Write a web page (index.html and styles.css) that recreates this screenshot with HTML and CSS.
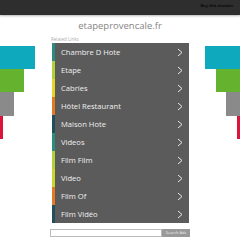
FILE: index.html
```html
<!DOCTYPE html>
<html>
<head>
<meta charset="utf-8">
<link rel="stylesheet" href="styles.css">
</head>
<body>
<div class="topbar"><span class="buy">Buy this domain.</span></div>
<div class="main">
  <div class="decor decor-left">
    <div class="bar cyan w35"></div>
    <div class="bar green w24"></div>
    <div class="bar gray w14"></div>
    <div class="bar red w3"></div>
  </div>
  <div class="center">
    <div class="domain">etapeprovencale.fr</div>
    <div class="related">Related Links</div>
    <ul class="links">
      <li class="c1"><span>Chambre D Hote</span><svg viewBox="0 0 6 9"><path d="M1 1 L5 4.5 L1 8" /></svg></li>
      <li class="c2"><span>Etape</span><svg viewBox="0 0 6 9"><path d="M1 1 L5 4.5 L1 8" /></svg></li>
      <li class="c3"><span>Cabries</span><svg viewBox="0 0 6 9"><path d="M1 1 L5 4.5 L1 8" /></svg></li>
      <li class="c4"><span>Hôtel Restaurant</span><svg viewBox="0 0 6 9"><path d="M1 1 L5 4.5 L1 8" /></svg></li>
      <li class="c5"><span>Maison Hote</span><svg viewBox="0 0 6 9"><path d="M1 1 L5 4.5 L1 8" /></svg></li>
      <li class="c6"><span>Videos</span><svg viewBox="0 0 6 9"><path d="M1 1 L5 4.5 L1 8" /></svg></li>
      <li class="c7"><span>Film Film</span><svg viewBox="0 0 6 9"><path d="M1 1 L5 4.5 L1 8" /></svg></li>
      <li class="c8"><span>Video</span><svg viewBox="0 0 6 9"><path d="M1 1 L5 4.5 L1 8" /></svg></li>
      <li class="c9"><span>Film Of</span><svg viewBox="0 0 6 9"><path d="M1 1 L5 4.5 L1 8" /></svg></li>
      <li class="c10"><span>Film Vidéo</span><svg viewBox="0 0 6 9"><path d="M1 1 L5 4.5 L1 8" /></svg></li>
    </ul>
    <div class="search">
      <input class="search-input" type="text">
      <button class="search-btn">Search Ads</button>
    </div>
  </div>
  <div class="decor decor-right">
    <div class="bar cyan w35"></div>
    <div class="bar green w24"></div>
    <div class="bar gray w14"></div>
    <div class="bar red w3"></div>
  </div>
</div>
</body>
</html>
```
FILE: styles.css
```css
html, body {
  margin: 0;
  padding: 0;
  background: #ffffff;
  font-family: "Open Sans", "Liberation Sans", sans-serif;
}
.topbar {
  height: 15px;
  background: #2e2e2e;
  display: flex;
  justify-content: flex-end;
  align-items: center;
  padding-right: 6px;
  box-shadow: 0 1px 2px rgba(0,0,0,0.3);
}
.buy {
  font-size: 4px;
  color: #0a0a0a;
  font-weight: 700;
  margin-top: -4px;
}
.main {
  display: flex;
}
.decor {
  width: 50px;
  padding-top: 31px;
  display: flex;
  flex-direction: column;
}
.decor-left { align-items: flex-start; }
.decor-right { align-items: flex-end; }
.bar { height: 23px; }
.bar.gray { height: 24px; }
.w35 { width: 35px; }
.w24 { width: 24px; }
.w14 { width: 14px; }
.w3 { width: 3px; }
.cyan { background: #0ea9bd; }
.green { background: #65b22f; }
.gray { background: #8a8a8a; }
.red { background: #dc143c; }
.center {
  width: 140px;
  display: flex;
  flex-direction: column;
}
.domain {
  padding-top: 2px;
  height: 18px;
  line-height: 18px;
  text-align: center;
  font-size: 9.5px;
  color: #858585;
}
.related {
  height: 8px;
  line-height: 8px;
  font-size: 4.5px;
  color: #aaa;
  padding-left: 1px;
}
.links {
  list-style: none;
  margin: 0 0 0 2px;
  padding: 0;
  width: 137px;
  background: #5b5b5b;
}
.links li {
  height: 18px;
  box-sizing: border-box;
  border-left: 3px solid #2a8c7e;
  display: flex;
  align-items: center;
  justify-content: space-between;
  padding: 0 6px 0 6px;
  color: #f0f0f0;
  font-size: 7.6px;
  font-weight: 500;
}
.links li svg {
  width: 6px;
  height: 9px;
  fill: none;
  stroke: #e8e8e8;
  stroke-width: 1;
}
.links .c1 { border-left-color: #2a8c7e; }
.links .c2 { border-left-color: #b3cf3a; }
.links .c3 { border-left-color: #e8d52a; }
.links .c4 { border-left-color: #e07b22; }
.links .c5 { border-left-color: #1f4e5f; }
.links .c6 { border-left-color: #2a8c7e; }
.links .c7 { border-left-color: #b3cf3a; }
.links .c8 { border-left-color: #c8d62e; }
.links .c9 { border-left-color: #e07b22; }
.links .c10 { border-left-color: #1f4e5f; }
.search {
  margin-top: 6px;
  display: flex;
  height: 8px;
}
.search-input {
  width: 112px;
  height: 8px;
  box-sizing: border-box;
  border: 1px solid #bbb;
  padding: 0;
  margin: 0;
  background: #fff;
}
.search-btn {
  width: 28px;
  height: 8px;
  box-sizing: border-box;
  border: none;
  margin: 0;
  padding: 0;
  background: #999;
  color: #eee;
  font-size: 4px;
  font-family: "Open Sans", "Liberation Sans", sans-serif;
  line-height: 8px;
}
```
